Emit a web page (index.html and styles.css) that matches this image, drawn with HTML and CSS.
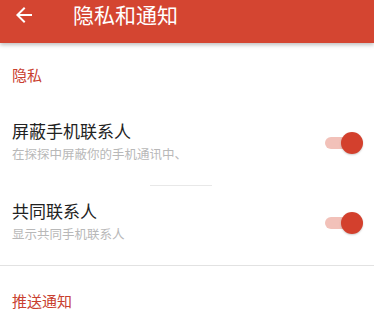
FILE: index.html
```html
<!DOCTYPE html>
<html lang="zh-CN">
<head>
    <meta charset="UTF-8">
    <meta name="viewport" content="width=device-width, initial-scale=1.0">
    <title>隐私和通知</title>
    <link rel="stylesheet" href="styles.css">
</head>
<body>

    <div class="toolbar">
        <svg class="back" width="24" height="24" viewBox="0 0 24 24">
            <path d="M20 11H7.83l5.59-5.59L12 4l-8 8 8 8 1.41-1.41L7.83 13H20v-2z" fill="#fff"/>
        </svg>
        <span class="toolbar-title">隐私和通知</span>
    </div>

    <p class="section-label">隐私</p>

    <div class="item">
        <div class="item-text">
            <p class="item-title">屏蔽手机联系人</p>
            <p class="item-desc">在探探中屏蔽你的手机通讯中、</p>
        </div>
        <div class="switch on"><span class="knob"></span></div>
    </div>
    <div class="divider short"></div>

    <div class="item">
        <div class="item-text">
            <p class="item-title">共同联系人</p>
            <p class="item-desc">显示共同手机联系人</p>
        </div>
        <div class="switch on"><span class="knob"></span></div>
    </div>
    <div class="divider"></div>

    <p class="section-label second">推送通知</p>

</body>
</html>
```

FILE: styles.css
```css
body {
    margin: 0;
    font-family: "Noto Sans CJK SC", "Noto Sans", sans-serif;
    background: #fff;
    overflow: hidden;
}
p {
    margin: 0;
}
.toolbar {
    height: 43px;
    background: #d44531;
    box-shadow: 0 2px 4px rgba(0, 0, 0, 0.25);
    display: flex;
    align-items: flex-start;
    padding: 2px 0 0 12px;
    box-sizing: border-box;
    position: relative;
}
.back {
    display: block;
    margin-top: 1px;
}
.toolbar-title {
    margin-left: 37px;
    color: #fff;
    font-size: 21px;
    line-height: 24px;
}
.section-label {
    padding: 22px 12px 21px;
    font-size: 15px;
    line-height: 20px;
    color: #c9402f;
}
.section-label.second {
    padding-top: 25px;
}
.item {
    display: flex;
    align-items: center;
    padding: 13px 11px 22px 12px;
}
.item-text {
    flex: 1;
}
.item-title {
    font-size: 17px;
    line-height: 24px;
    color: #222;
}
.item-desc {
    margin-top: 2px;
    font-size: 12.5px;
    line-height: 18px;
    color: #b8b8b8;
}
.switch {
    position: relative;
    width: 38px;
    height: 22px;
    margin-top: 4px;
}
.switch::before {
    content: "";
    position: absolute;
    left: 0;
    top: 5px;
    width: 32px;
    height: 12px;
    border-radius: 6px;
    background: #f2c1b9;
}
.knob {
    position: absolute;
    right: 0;
    top: 0;
    width: 22px;
    height: 22px;
    border-radius: 50%;
    background: #d3402d;
    box-shadow: 0 1px 2px rgba(0, 0, 0, 0.2);
}
.divider {
    height: 1px;
    background: #e2e2e2;
}
.divider.short {
    width: 62px;
    margin-left: 150px;
    background: #e8e8e8;
}
```
